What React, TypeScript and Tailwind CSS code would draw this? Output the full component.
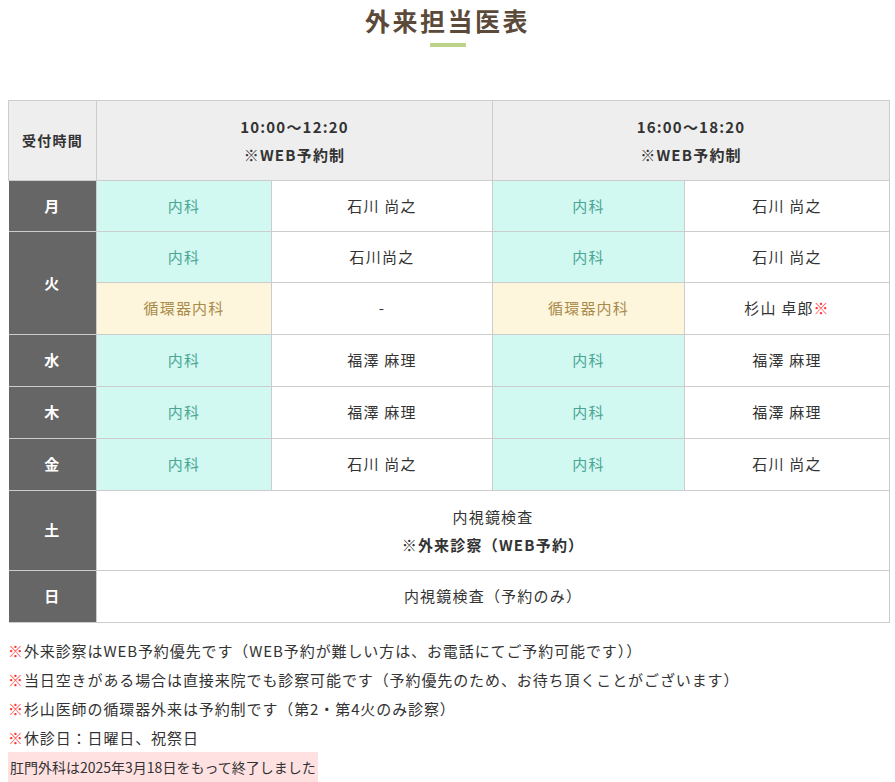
import React from 'react';

const font = { fontFamily: '"Noto Sans CJK JP", "Noto Sans", sans-serif' };

type Cell = { dept: string; doc: React.ReactNode; warm?: boolean };

const Dept = ({ c }: { c: Cell }) => (
  <>
    <td className={`border border-[#cccccc] text-center ${c.warm ? 'bg-[#fdf5dc] text-[#a88a4a]' : 'bg-[#d2f8f2] text-[#4aa593]'}`}>{c.dept}</td>
    <td className="border border-[#cccccc] text-center bg-white text-[#333]">{c.doc}</td>
  </>
);

const Day = ({ d, rows = 1 }: { d: string; rows?: number }) => (
  <th rowSpan={rows} className="bg-[#666666] text-white font-bold border-y border-[#cccccc]">{d}</th>
);

export default function App() {
  const rows: { d: string; am: Cell; pm: Cell }[] = [
    { d: '水', am: { dept: '内科', doc: '福澤 麻理' }, pm: { dept: '内科', doc: '福澤 麻理' } },
    { d: '木', am: { dept: '内科', doc: '福澤 麻理' }, pm: { dept: '内科', doc: '福澤 麻理' } },
    { d: '金', am: { dept: '内科', doc: '石川 尚之' }, pm: { dept: '内科', doc: '石川 尚之' } },
  ];
  return (
    <div className="bg-white w-[895px] h-[782px] overflow-hidden text-[15px] tracking-[0.08em] text-[#333]" style={font}>
      <div className="flex flex-col items-center pt-[4px]">
        <h2 className="text-[25px] font-bold text-[#5b4a3a] tracking-[0.1em] leading-[32px]">外来担当医表</h2>
        <div className="w-[36px] h-[4px] bg-[#bcd38a] mt-[7px]" />
      </div>
      <table className="ml-[8px] mt-[53px] w-[881px] border-collapse table-fixed">
        <colgroup>
          <col className="w-[88px]" />
          <col className="w-[175px]" />
          <col className="w-[221px]" />
          <col className="w-[192px]" />
          <col className="w-[205px]" />
        </colgroup>
        <tbody>
          <tr className="h-[80px] bg-[#eeeeee]">
            <th className="border border-[#cccccc] font-bold text-[14px]">受付時間</th>
            <th colSpan={2} className="border border-[#cccccc] font-bold leading-[28px]">10:00〜12:20<br />※WEB予約制</th>
            <th colSpan={2} className="border border-[#cccccc] font-bold leading-[28px]">16:00〜18:20<br />※WEB予約制</th>
          </tr>
          <tr className="h-[51px]">
            <Day d="月" />
            <Dept c={{ dept: '内科', doc: '石川 尚之' }} />
            <Dept c={{ dept: '内科', doc: '石川 尚之' }} />
          </tr>
          <tr className="h-[51px]">
            <Day d="火" rows={2} />
            <Dept c={{ dept: '内科', doc: '石川尚之' }} />
            <Dept c={{ dept: '内科', doc: '石川 尚之' }} />
          </tr>
          <tr className="h-[52px]">
            <Dept c={{ dept: '循環器内科', doc: '-', warm: true }} />
            <Dept c={{ dept: '循環器内科', doc: <>杉山 卓郎<span className="text-[#ff3333]">※</span></>, warm: true }} />
          </tr>
          {rows.map((r) => (
            <tr key={r.d} className="h-[52px]">
              <Day d={r.d} />
              <Dept c={r.am} />
              <Dept c={r.pm} />
            </tr>
          ))}
          <tr className="h-[80px]">
            <Day d="土" />
            <td colSpan={4} className="border border-[#cccccc] text-center leading-[28px]">内視鏡検査<br /><b>※外来診察（WEB予約）</b></td>
          </tr>
          <tr className="h-[52px]">
            <Day d="日" />
            <td colSpan={4} className="border border-[#cccccc] text-center">内視鏡検査（予約のみ）</td>
          </tr>
        </tbody>
      </table>
      <div className="px-[8px] pt-[13px] leading-[29px] tracking-[0.06em]">
        <p><span className="text-[#ff3333]">※</span>外来診察はWEB予約優先です（WEB予約が難しい方は、お電話にてご予約可能です））</p>
        <p><span className="text-[#ff3333]">※</span>当日空きがある場合は直接来院でも診察可能です（予約優先のため、お待ち頂くことがございます）</p>
        <p><span className="text-[#ff3333]">※</span>杉山医師の循環器外来は予約制です（第2・第4火のみ診察）</p>
        <p><span className="text-[#ff3333]">※</span>休診日：日曜日、祝祭日</p>
        <p className="inline-block bg-[#ffe1e1] px-[2px] text-[14px] leading-[30px] tracking-normal">肛門外科は2025年3月18日をもって終了しました</p>
      </div>
    </div>
  );
}
